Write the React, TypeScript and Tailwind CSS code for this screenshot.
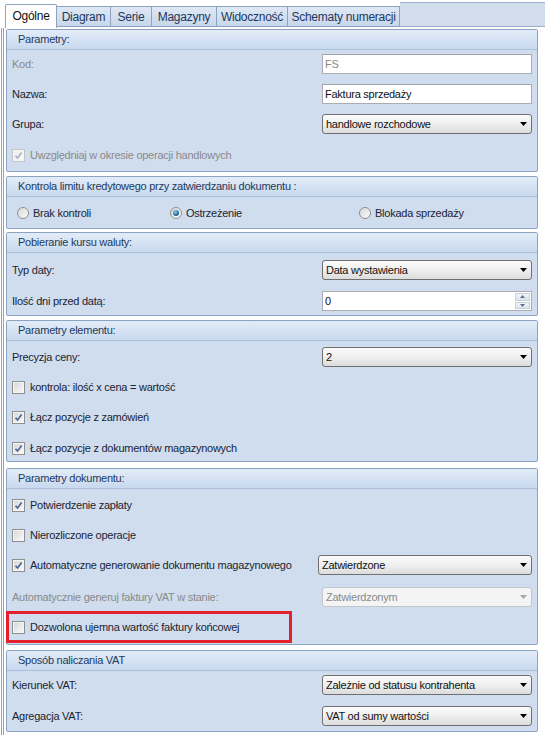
import React from 'react';

const Check = ({ disabled }: { disabled?: boolean }) => (
  <svg width="9" height="9" viewBox="0 0 9 9" className="absolute left-[1px] top-[1px]">
    <path d="M1.5 4.8 L3.6 7 L7.6 1.6" fill="none" stroke={disabled ? '#a9b3c2' : '#4f6796'} strokeWidth="1.7" />
  </svg>
);

const Checkbox = ({ checked, disabled, label }: { checked?: boolean; disabled?: boolean; label: string }) => (
  <div className="flex items-center h-[20px] gap-[5px]">
    <div className={`relative w-[13px] h-[13px] border p-[1px] bg-[#f5f5f5] ${disabled ? 'border-[#c2c5ca]' : 'border-[#8e8f8f]'}`}>
      <div className={`w-full h-full bg-gradient-to-br ${disabled ? 'from-[#eeeeee] to-[#fafafa]' : 'from-[#d9d9d9] to-[#f8f8f8]'}`} />
      {checked && <Check disabled={disabled} />}
    </div>
    <span className={disabled ? 'text-[#8a8a8a]' : ''}>{label}</span>
  </div>
);

const Radio = ({ checked, label }: { checked?: boolean; label: string }) => (
  <div className="flex items-center gap-[4px]">
    <div className="w-[12px] h-[12px] rounded-full border border-[#8e8f8f] bg-gradient-to-br from-[#d8d8d8] to-[#fafafa] flex items-center justify-center">
      {checked && <div className="w-[6px] h-[6px] rounded-full bg-[radial-gradient(circle_at_40%_35%,#8fd0f5,#185a8c_70%)]" />}
    </div>
    <span>{label}</span>
  </div>
);

const Arrow = ({ color = '#000' }: { color?: string }) => (
  <svg width="7" height="4" viewBox="0 0 7 4">
    <path d="M0 0 H7 L3.5 4 Z" fill={color} />
  </svg>
);

const Select = ({ value, disabled, className = 'w-[210px]' }: { value: string; disabled?: boolean; className?: string }) => (
  <div
    className={`${className} h-[20px] rounded-[3px] border flex items-center justify-between pl-[3px] pr-[4px] ${
      disabled
        ? 'border-[#c3c7cc] bg-[#f4f4f4] text-[#8a8a8a]'
        : 'border-[#707070] bg-gradient-to-b from-[#fbfbfb] via-[#efefef] to-[#dcdcdc] text-[#111]'
    }`}
  >
    <span>{value}</span>
    <Arrow color={disabled ? '#a6a6a6' : '#000'} />
  </div>
);

const TextBox = ({ value, disabled }: { value: string; disabled?: boolean }) => (
  <div className={`w-[210px] h-[20px] border border-[#abadb3] border-t-[#a0a4ab] bg-white flex items-center pl-[2px] ${disabled ? 'text-[#8a8a8a]' : 'text-[#111]'}`}>
    {value}
  </div>
);

const Spin = ({ value }: { value: string }) => (
  <div className="w-[210px] h-[20px] border border-[#abadb3] bg-white flex items-center justify-between pl-[2px] pr-[1px]">
    <span className="text-[#111]">{value}</span>
    <div className="flex flex-col w-[15px] h-[16px] gap-[1px]">
      <div className="flex-1 border border-[#c7cfd9] bg-gradient-to-b from-[#f3f5f8] to-[#dde3ea] flex items-center justify-center">
        <svg width="5" height="3" viewBox="0 0 5 3"><path d="M0 3 H5 L2.5 0 Z" fill="#5b6f96" /></svg>
      </div>
      <div className="flex-1 border border-[#c7cfd9] bg-gradient-to-b from-[#f3f5f8] to-[#dde3ea] flex items-center justify-center">
        <svg width="5" height="3" viewBox="0 0 5 3"><path d="M0 0 H5 L2.5 3 Z" fill="#5b6f96" /></svg>
      </div>
    </div>
  </div>
);

const Row = ({ label, disabled, children }: { label: string; disabled?: boolean; children: React.ReactNode }) => (
  <div className="flex items-center justify-between h-[20px]">
    <span className={disabled ? 'text-[#8a8a8a]' : ''}>{label}</span>
    {children}
  </div>
);

const Group = ({ title, className, body, children }: { title: string; className: string; body: string; children: React.ReactNode }) => (
  <div className={`border border-[#8ba3c3] rounded-[2px] bg-[#d0ddee] ${className}`}>
    <div className="h-[20px] flex items-center pl-[11px] text-[#1e395b] bg-gradient-to-b from-[#e3ecf8] to-[#c8d9ef] border-b border-[#a9bfda]">
      {title}
    </div>
    <div className={`px-[5px] flex flex-col ${body}`}>{children}</div>
  </div>
);

const tabs = ['Diagram', 'Serie', 'Magazyny', 'Widoczność', 'Schematy numeracji'];
const tabW = ['w-[54px]', 'w-[41px]', 'w-[65px]', 'w-[71px]', 'w-[112px]'];

export default function App() {
  return (
    <div className="w-[545px] h-[735px] bg-white overflow-hidden text-[11px] tracking-[-0.25px] leading-none text-[#1b2433] font-['Liberation_Sans',Arial,sans-serif]">
      <div className="flex items-end h-[28px] pl-[5px]">
        <div className="w-[52px] h-[24px] bg-white border border-b-0 border-[#8da2bf] rounded-t-[2px] flex items-center justify-center text-[#111] text-[12px] pb-[2px]">
          Ogólne
        </div>
        {tabs.map((t, i) => (
          <div
            key={t}
            className={`${tabW[i]} h-[21px] mb-[1px] border border-l-0 border-[#8da2bf] bg-gradient-to-b from-[#dfe8f5] to-[#c7d7ec] flex items-center justify-center text-[#1e395b] text-[12px]`}
          >
            {t}
          </div>
        ))}
        <div className="flex-1 self-start mt-[2px] h-[25px] bg-[#d2ddec] border-y border-[#99b0cf]" />
      </div>
      <div className="ml-[1px] h-[707px] border-l-[3px] border-double border-[#8da2bf] pl-[2px] pr-[7px] pt-[1px]">
        <Group title="Parametry:" className="h-[143px]" body="pt-[4px] gap-[10px]">
          <Row label="Kod:" disabled><TextBox value="FS" disabled /></Row>
          <Row label="Nazwa:"><TextBox value="Faktura sprzedaży" /></Row>
          <Row label="Grupa:"><Select value="handlowe rozchodowe" /></Row>
          <div className="mt-[1px]"><Checkbox checked disabled label="Uwzględniaj w okresie operacji handlowych" /></div>
        </Group>

        <Group title="Kontrola limitu kredytowego przy zatwierdzaniu dokumentu :" className="mt-[4px] h-[53px]" body="pt-[6px]">
          <div className="flex items-center h-[20px] pl-[5px]">
            <div className="w-[153px]"><Radio label="Brak kontroli" /></div>
            <div className="w-[189px]"><Radio checked label="Ostrzeżenie" /></div>
            <Radio label="Blokada sprzedaży" />
          </div>
        </Group>

        <Group title="Pobieranie kursu waluty:" className="mt-[3px] h-[84px]" body="pt-[7px] gap-[11px]">
          <Row label="Typ daty:"><Select value="Data wystawienia" /></Row>
          <Row label="Ilość dni przed datą:"><Spin value="0" /></Row>
        </Group>

        <Group title="Parametry elementu:" className="mt-[4px] h-[142px]" body="pt-[6px] gap-[10px]">
          <Row label="Precyzja ceny:"><Select value="2" /></Row>
          <Checkbox label="kontrola: ilość x cena = wartość" />
          <Checkbox checked label="Łącz pozycje z zamówień" />
          <div className="mt-[1px]"><Checkbox checked label="Łącz pozycje z dokumentów magazynowych" /></div>
        </Group>

        <Group title="Parametry dokumentu:" className="mt-[6px] h-[177px]" body="pt-[6px] gap-[10px]">
          <Checkbox checked label="Potwierdzenie zapłaty" />
          <Checkbox label="Nierozliczone operacje" />
          <div className="flex items-center justify-between h-[20px]">
            <Checkbox checked label="Automatyczne generowanie dokumentu magazynowego" />
            <Select value="Zatwierdzone" className="w-[214px]" />
          </div>
          <div className="mt-[2px]">
            <Row label="Automatycznie generuj faktury VAT w stanie:" disabled><Select value="Zatwierdzonym" disabled /></Row>
          </div>
          <div className="-mt-[6px] -ml-[6px] w-[286px] h-[32px] border-[3px] border-[#e3202b] flex items-center pl-[3px]">
            <Checkbox label="Dozwolona ujemna wartość faktury końcowej" />
          </div>
        </Group>

        <Group title="Sposób naliczania VAT" className="mt-[5px] h-[82px]" body="pt-[4px] gap-[11px]">
          <Row label="Kierunek VAT:"><Select value="Zależnie od statusu kontrahenta" /></Row>
          <Row label="Agregacja VAT:"><Select value="VAT od sumy wartości" /></Row>
        </Group>
      </div>
    </div>
  );
}
